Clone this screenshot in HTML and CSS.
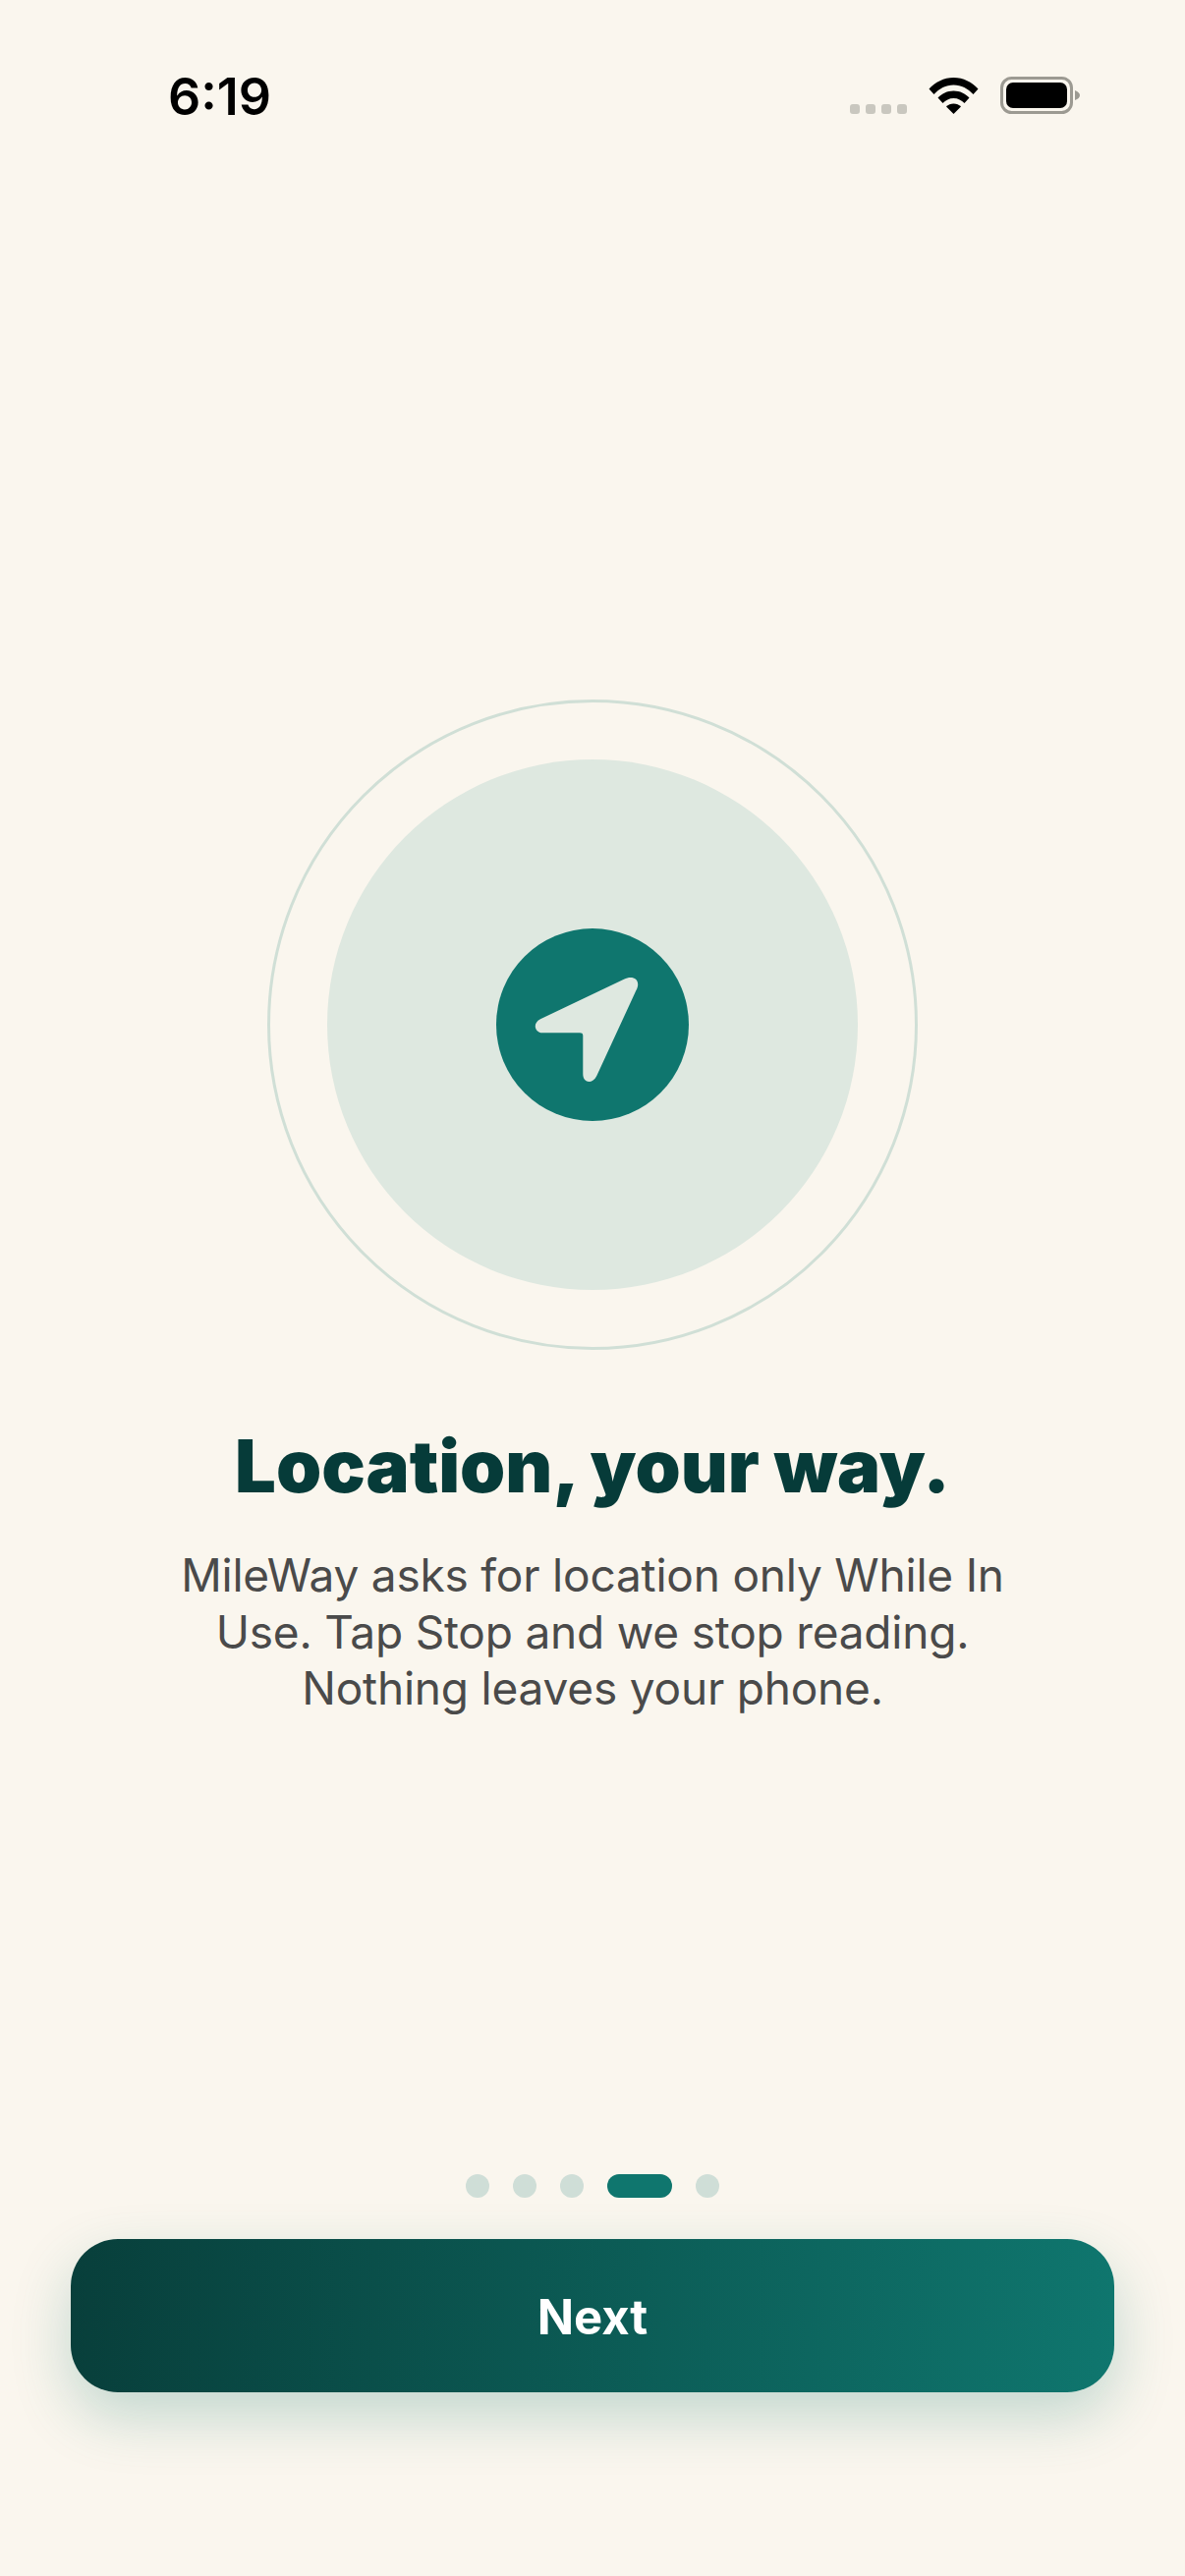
FILE: index.html
```html
<!DOCTYPE html>
<html lang="en">

<head>
    <meta charset="UTF-8">
    <meta name="viewport" content="width=device-width, initial-scale=1.0">
    <title>MileWay</title>
    <link rel="stylesheet" href="styles.css">
</head>

<body>
    <div class="status-bar">
        <span class="time">6:19</span>
        <div class="status-icons">
            <div class="signal">
                <span></span><span></span><span></span><span></span>
            </div>
            <svg class="wifi" width="51" height="38" viewBox="0 0 51 38">
                <path d="M0.5 12.5C7 5.5 15.5 1 25.5 1S44 5.500 50.500 12.500L45.500 18C40 12.300 33.500 8.500 25.500 8.500S11 12.300 5.500 18Z" />
                <path d="M9.500 21.500C13.500 17.300 19 14.500 25.500 14.500S37.500 17.300 41.500 21.500L36.500 27C33.500 24 30 22 25.500 22S17.500 24 14.500 27Z" />
                <path d="M18 30.500C20 28.800 22.500 27.500 25.500 27.500S31 28.800 33 30.500L25.500 38Z" />
            </svg>
            <svg class="battery" width="82" height="38" viewBox="0 0 82 38">
                <rect x="1.500" y="1.500" width="71" height="35" rx="10" fill="none" stroke="#9c9a92" stroke-width="3" />
                <rect x="6" y="6" width="62" height="26" rx="7" fill="#000" />
                <path d="M76 14C79 15 81 17 81 19S79 23 76 24Z" fill="#9c9a92" />
            </svg>
        </div>
    </div>

    <main class="hero">
        <div class="ring">
            <div class="disc">
                <div class="core">
                    <svg width="196" height="196" viewBox="0 0 196 196">
                        <path class="arrow" d="M45 92.300L130 51.700C140 47 148 53 142.300 63.300L102.300 150C98 159 88.300 157.500 88.300 148.300V109C88.300 107 87 106.300 85 106.300H46.700C40 106.300 36 97 45 92.300Z" />
                    </svg>
                </div>
            </div>
        </div>
        <h1>Location, your way.</h1>
        <p>MileWay asks for location only While In<br>Use. Tap Stop and we stop reading.<br>Nothing leaves your phone.</p>
    </main>

    <footer class="actions">
        <div class="pager">
            <span class="dot"></span>
            <span class="dot"></span>
            <span class="dot"></span>
            <span class="dot active"></span>
            <span class="dot"></span>
        </div>
        <button class="next-btn">Next</button>
    </footer>
</body>

</html>
```

FILE: styles.css
```css
* {
    box-sizing: border-box;
}

body {
    font-family: 'Inter', sans-serif;
    background-color: #faf6ee;
    margin: 0;
    width: 1206px;
    height: 2622px;
    overflow: hidden;
    display: flex;
    flex-direction: column;
}

.status-bar {
    display: flex;
    justify-content: space-between;
    align-items: flex-start;
    height: 140px;
    padding: 68px 106px 0 171px;
}

.time {
    font-size: 52px;
    font-weight: 600;
    line-height: 62px;
    color: #000;
}

.status-icons {
    display: flex;
    align-items: flex-end;
    gap: 22px;
    padding-top: 10px;
}

.signal {
    display: flex;
    gap: 6px;
}

.signal span {
    width: 10px;
    height: 10px;
    border-radius: 3px;
    background-color: #c9c7bf;
}

.wifi {
    fill: #000;
}

.hero {
    display: flex;
    flex-direction: column;
    align-items: center;
    padding-top: 572px;
    flex: 1;
}

.ring {
    width: 662px;
    height: 662px;
    border-radius: 50%;
    border: 3px solid #d0dfd6;
    display: flex;
    align-items: center;
    justify-content: center;
}

.disc {
    width: 540px;
    height: 540px;
    border-radius: 50%;
    background-color: #dee8e0;
    display: flex;
    align-items: center;
    justify-content: center;
}

.core {
    width: 196px;
    height: 196px;
    border-radius: 50%;
    background-color: #0f766e;
    display: flex;
}

.arrow {
    fill: #dee8e0;
}

h1 {
    margin: 74px 0 0;
    font-size: 74px;
    font-weight: 900;
    line-height: 88px;
    color: #063b39;
}

p {
    margin: 39px 0 0;
    font-size: 46px;
    line-height: 57.600px;
    letter-spacing: -0.2px;
    color: #4a4a4a;
    text-align: center;
}

.actions {
    display: flex;
    flex-direction: column;
    align-items: center;
    padding: 0 72px 187px;
}

.pager {
    display: flex;
    gap: 24px;
    margin-bottom: 42px;
}

.dot {
    width: 24px;
    height: 24px;
    border-radius: 12px;
    background-color: #cfded7;
}

.dot.active {
    width: 66px;
    background-color: #0f766e;
}

.next-btn {
    width: 100%;
    height: 156px;
    padding-top: 3px;
    border: none;
    border-radius: 48px;
    font-family: inherit;
    font-size: 49px;
    font-weight: 700;
    color: #fff;
    background: linear-gradient(90deg, #083f3b, #0f766e);
    box-shadow: 0 24px 60px rgba(15, 118, 110, 0.24);
}
```
